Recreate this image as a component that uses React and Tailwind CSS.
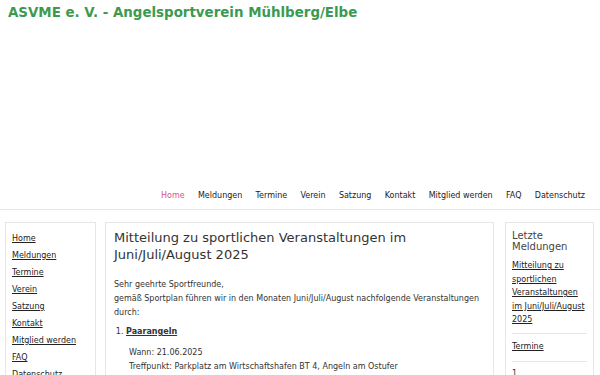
const NAV = ["Home", "Meldungen", "Termine", "Verein", "Satzung", "Kontakt", "Mitglied werden", "FAQ", "Datenschutz"];

export default function App() {
  return (
    <div className="min-h-screen bg-white text-[#333] font-['DejaVu_Sans',sans-serif]">
      {/* Kopf */}
      <header className="h-[210px] flex flex-col border-b border-[#e6e6e6]">
        <h1 className="pl-2 pt-[5px] text-[13.4px] font-bold text-[#3c9a50] leading-4">
          ASVME e. V. - Angelsportverein Mühlberg/Elbe
        </h1>
        <nav className="mt-auto mb-[7px] pr-[15px] flex justify-end gap-[13.3px] text-[8px] leading-3">
          {NAV.map((n, i) => (
            <span key={n} className={i === 0 ? "text-[#d9548a]" : "text-[#222]"}>
              {n}
            </span>
          ))}
        </nav>
      </header>

      <div className="flex items-start pt-3 pl-[5px] pr-[6px]">
        {/* Linke Navigation */}
        <aside className="w-[91px] shrink-0 border border-[#e6e6e6] px-[6px] pt-[10px] pb-2 text-[8px]">
          <ul className="flex flex-col gap-[6px] leading-[11px]">
            {NAV.map((n) => (
              <li key={n}>
                <span className="underline text-[#222]">{n}</span>
              </li>
            ))}
          </ul>
        </aside>

        {/* Inhalt */}
        <main className="ml-[9px] w-[389px] shrink-0 border border-[#e6e6e6] px-2 pt-[6px] pb-4">
          <h2 className="text-[13px] leading-[17px] text-[#333]">
            Mitteilung zu sportlichen Veranstaltungen im Juni/Juli/August 2025
          </h2>
          <div className="mt-[15px] text-[8px] leading-[14px]">
            <p>
              Sehr geehrte Sportfreunde,
              <br />
              gemäß Sportplan führen wir in den Monaten Juni/Juli/August nachfolgende Veranstaltungen durch:
            </p>
            <ol className="mt-[5px] list-decimal pl-3">
              <li>
                <span className="font-bold underline">Paarangeln</span>
                <div className="mt-[7px] pl-[3px]">
                  Wann: 21.06.2025
                  <br />
                  Treffpunkt: Parkplatz am Wirtschaftshafen BT 4, Angeln am Ostufer
                </div>
              </li>
            </ol>
          </div>
        </main>

        {/* Rechte Spalte */}
        <aside className="ml-[11px] w-[89px] shrink-0 border border-[#e6e6e6] px-[6px] pt-[7px] pb-2 text-[8px]">
          <h3 className="text-[10px] leading-[11px] text-[#444]">Letzte Meldungen</h3>
          <div className="mt-[7px] leading-[13.5px] pb-[6px] border-b border-[#e6e6e6]">
            <span className="underline text-[#222]">Mitteilung zu sportlichen Veranstaltungen im Juni/Juli/August 2025</span>
          </div>
          <div className="pt-[6px] pb-[7px] leading-[14px] border-b border-[#e6e6e6]">
            <span className="underline text-[#222]">Termine</span>
          </div>
          <div className="pt-[5px] leading-[14px]">1.</div>
        </aside>
      </div>
    </div>
  );
}
